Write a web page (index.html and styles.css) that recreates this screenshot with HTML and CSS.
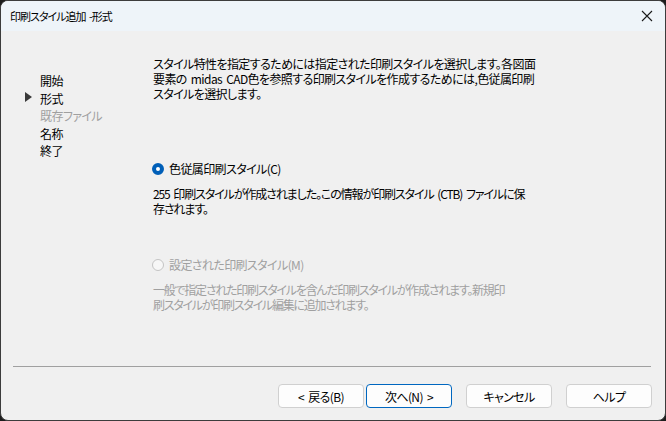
FILE: index.html
```html
<!DOCTYPE html>
<html lang="ja">
<head>
    <meta charset="UTF-8">
    <meta name="viewport" content="width=device-width, initial-scale=1.0">
    <title>印刷スタイル追加 -形式</title>
    <link rel="stylesheet" href="styles.css">
</head>
<body>

<div class="window">
    <div class="titlebar">
        <span class="title">印刷スタイル追加 -形式</span>
        <span class="close">
            <svg width="12" height="12" viewBox="0 0 12 12"><path d="M1 1L11 11M11 1L1 11" stroke="#1a1a1a" stroke-width="1.1" fill="none"/></svg>
        </span>
    </div>

    <div class="dialog">
        <div class="wizard">
            <ul class="steps">
                <li>開始</li>
                <li class="current">形式</li>
                <li class="disabled">既存ファイル</li>
                <li>名称</li>
                <li>終了</li>
            </ul>

            <div class="page">
                <p class="intro">スタイル特性を指定するためには指定された印刷スタイルを選択します。各図面<br>要素の midas CAD色を参照する印刷スタイルを作成するためには,色従属印刷<br>スタイルを選択します。</p>

                <div class="option">
                    <label class="radio"><span class="dot checked"></span>色従属印刷スタイル(C)</label>
                    <p class="desc">255 印刷スタイルが作成されました。この情報が印刷スタイル (CTB) ファイルに保<br>存されます。</p>
                </div>

                <div class="option disabled">
                    <label class="radio"><span class="dot"></span>設定された印刷スタイル(M)</label>
                    <p class="desc">一般で指定された印刷スタイルを含んだ印刷スタイルが作成されます。新規印<br>刷スタイルが印刷スタイル編集に追加されます。</p>
                </div>
            </div>
        </div>

        <div class="sep"></div>

        <div class="buttons">
            <button class="back">&lt; 戻る(B)</button>
            <button class="next">次へ(N) &gt;</button>
            <button>キャンセル</button>
            <button>ヘルプ</button>
        </div>
    </div>
</div>

</body>
</html>
```

FILE: styles.css
```css
html, body {
    margin: 0;
    padding: 0;
    background: #1c1c1c;
}
body {
    font-family: "Noto Sans CJK JP", "Noto Sans", sans-serif;
    font-size: 12px;
    font-feature-settings: "palt";
    letter-spacing: -0.6px;
    word-spacing: 2px;
    color: #000;
}
.window {
    width: 666px;
    height: 421px;
    box-sizing: border-box;
    border: 1px solid #3c3c3c;
    border-radius: 8px;
    overflow: hidden;
    background: #f0f0f0;
    display: flex;
    flex-direction: column;
}
.titlebar {
    height: 30px;
    background: #eef4f9;
    display: flex;
    align-items: center;
    justify-content: space-between;
    padding: 0 10px 0 9px;
}
.title {
    font-size: 11px;
    letter-spacing: -1px;
    word-spacing: 2px;
}
.close {
    display: flex;
    margin-right: 2px;
}
.dialog {
    flex: 1;
    display: flex;
    flex-direction: column;
}
.wizard {
    flex: 1;
    display: flex;
}
.steps {
    list-style: none;
    margin: 0;
    padding: 41px 0 0 24px;
    width: 128px;
}
.steps li {
    line-height: 17.5px;
    padding-left: 15px;
    position: relative;
}
.steps li.current::before {
    content: "";
    position: absolute;
    left: 0;
    top: 2px;
    border-left: 7px solid #3a3a3a;
    border-top: 5px solid transparent;
    border-bottom: 5px solid transparent;
}
.steps li.disabled {
    color: #a0a0a0;
}
.page {
    flex: 1;
    padding-top: 25px;
}
.intro {
    margin: 0;
    line-height: 15px;
    white-space: nowrap;
}
.option {
    margin-top: 59px;
}
.option + .option {
    margin-top: 40px;
}
.radio {
    display: flex;
    align-items: center;
    line-height: 17px;
}
.dot {
    width: 12px;
    height: 12px;
    box-sizing: border-box;
    border-radius: 50%;
    border: 1px solid #c4c4c4;
    background: #f7f7f7;
    margin: 0 5px 0 -1px;
}
.dot.checked {
    border: 4px solid #005fb8;
    background: #fff;
}
.desc {
    margin: 9px 0 0;
    line-height: 15px;
    white-space: nowrap;
    letter-spacing: -1.1px;
}
.option.disabled .desc {
    letter-spacing: -1.25px;
}
.option.disabled {
    color: #a0a0a0;
}
.sep {
    height: 1px;
    background: #a0a0a0;
    margin: 0 14px 0 12px;
}
.buttons {
    display: flex;
    justify-content: flex-end;
    padding: 17px 13px 12px 0;
}
button {
    width: 86px;
    height: 24px;
    margin-left: 14px;
    font-family: inherit;
    font-size: 12px;
    font-feature-settings: "palt";
    letter-spacing: -0.6px;
    word-spacing: 2px;
    color: #000;
    background: #fdfdfd;
    border: 1px solid #d0d0d0;
    border-radius: 4px;
    padding: 0;
}
button.next {
    margin-left: 2px;
    border-color: #0067c0;
}
button.back {
    margin-left: 0;
}
```
